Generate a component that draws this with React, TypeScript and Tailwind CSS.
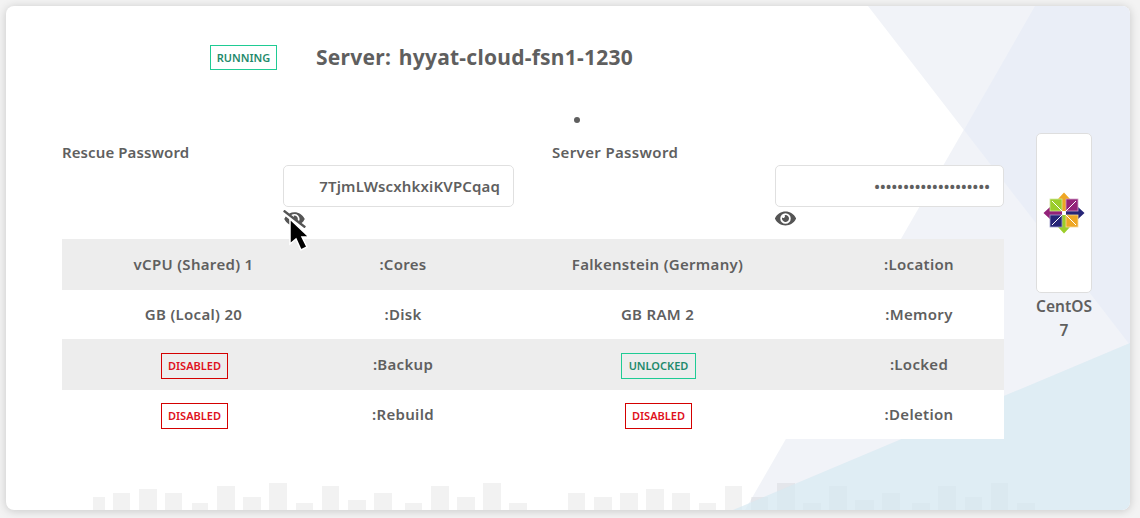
import type { ReactNode } from 'react';
import { FaEye, FaEyeSlash } from 'react-icons/fa';

const bars = [
  [93, 12, 13], [113, 17, 17], [139, 18, 21], [165, 17, 17], [192, 16, 7], [217, 18, 24], [243, 18, 13], [269, 18, 27], [296, 17, 7],
  [322, 17, 24], [348, 18, 10], [374, 18, 17], [405, 17, 7], [431, 18, 24], [457, 18, 13], [483, 18, 27], [509, 18, 7],
  [568, 17, 17], [594, 18, 13], [620, 18, 17], [646, 18, 21], [672, 18, 17], [699, 17, 7], [725, 17, 24], [751, 17, 13], [777, 18, 27],
  [803, 18, 7], [829, 18, 24], [855, 19, 10], [882, 18, 17], [912, 18, 7], [938, 18, 24], [965, 17, 13], [991, 17, 27], [1017, 18, 7],
];

function Backdrop() {
  return (
    <svg className="absolute inset-0 w-full h-full" viewBox="6 6 1124 504" preserveAspectRatio="none">
      <polygon points="868,6 1130,6 1130,345" fill="#f1f3f8" />
      <polygon points="1035,6 745,510 1130,510 1130,345" fill="#f1f3f8" />
      <polygon points="1035,6 1130,6 1130,345 964,130" fill="#eaeef7" />
      {bars.map(([x, w, h]) => (
        <rect key={x} x={x} y={510 - h} width={w} height={h} fill="#000" fillOpacity={0.05} />
      ))}
      <polygon points="733,510 1130,343 1130,510" fill="#d7eaf2" fillOpacity={0.7} />
    </svg>
  );
}

function Badge({ label, tone, size }: { label: string; tone: 'green' | 'red'; size: string }) {
  const cls =
    tone === 'green'
      ? 'border-[#1fcb94] text-[#1f8a6c]'
      : 'border-[#d40000] text-[#e01020]';
  return (
    <span className={`inline-block border text-center text-[11px] font-semibold ${size} ${cls}`}>
      {label}
    </span>
  );
}

function PasswordField({ label, value, type, slashed, inputWidth, labelTracking }: { label: string; value: string; type: string; slashed?: boolean; inputWidth: string; labelTracking: string }) {
  return (
    <div className="flex justify-between">
      <span className={`font-semibold text-[15px] leading-[20px] text-[#5f5f5f] mt-[19px] ${labelTracking}`}>{label}</span>
      <div className={`flex flex-col mt-[42px] ${inputWidth}`}>
        <input
          readOnly
          type={type}
          value={value}
          className="w-full h-[42px] rounded-[5px] border border-[#e0e0e0] bg-white text-right pr-[13px] text-[15px] tracking-[0.15px] font-semibold text-[#5f5f5f] outline-none"
        />
        {slashed ? <FaEyeSlash className="text-[#555] w-[23px] h-[18px] mt-[3px]" /> : <FaEye className="text-[#555] w-[21px] h-[19px] mt-[2px]" />}
      </div>
    </div>
  );
}

function Row({ cells, shaded }: { cells: ReactNode[]; shaded?: boolean }) {
  return (
    <div className={`grid grid-cols-[263px_156px_353px_170px] items-center text-center text-[15px] tracking-[0.3px] font-semibold text-[#5f5f5f] ${shaded ? 'h-[51px] bg-[#ededed]' : 'h-[49px] bg-white'}`}>
      {cells.map((c, i) => (
        <div key={i} className="flex justify-center">{c}</div>
      ))}
    </div>
  );
}

function TableBadge(props: { label: string; tone: 'green' | 'red'; size: string }) {
  return (
    <span className="mt-[3px] ml-[2px] flex tracking-normal">
      <Badge {...props} />
    </span>
  );
}

export default function App() {
  return (
    <div className="h-[518px] w-[1140px] overflow-hidden bg-[#f3f3f3] pt-[6px] pl-[6px] font-['Noto_Sans',sans-serif]">
      <div className="relative w-[1124px] h-[504px] rounded-[8px] overflow-hidden bg-white shadow-[0_1px_10px_rgba(0,0,0,0.18)]">
        <Backdrop />
        <div className="relative flex pl-[56px]">
          <div className="w-[942px]">
            <div className="flex items-center h-[52px] mt-[26px] pl-[148px]">
              <Badge label="RUNNING" tone="green" size="w-[67px] h-[25px] leading-[23px] mb-[1px]" />
              <h1 className="ml-[39px] text-[21px] tracking-[0.25px] [word-spacing:2px] font-bold text-[#5f5f5f]">Server: hyyat-cloud-fsn1-1230</h1>
            </div>
            <div className="h-[6px] mt-[33px] pl-[512px]">
              <div className="w-[6px] h-[6px] rounded-full bg-[#5f5f5f]" />
            </div>
            <div className="grid grid-cols-[452px_452px] gap-x-[38px] h-[116px]">
              <PasswordField label="Rescue Password" labelTracking="tracking-[0.1px]" value="7TjmLWscxhkxiKVPCqaq" type="text" slashed inputWidth="w-[231px]" />
              <PasswordField label="Server Password" labelTracking="tracking-[0.35px]" value="aaaaaaaaaaaaaaaaaaaa" type="password" inputWidth="w-[229px]" />
            </div>
            <Row shaded cells={['vCPU (Shared) 1', ':Cores', 'Falkenstein (Germany)', ':Location']} />
            <Row cells={['GB (Local) 20', ':Disk', 'GB RAM 2', ':Memory']} />
            <Row shaded cells={[<TableBadge label="DISABLED" tone="red" size="w-[67px] h-[26px] leading-[24px]" />, ':Backup', <TableBadge label="UNLOCKED" tone="green" size="w-[75px] h-[26px] leading-[24px]" />, ':Locked']} />
            <Row cells={[<TableBadge label="DISABLED" tone="red" size="w-[67px] h-[26px] leading-[24px]" />, ':Rebuild', <TableBadge label="DISABLED" tone="red" size="w-[67px] h-[26px] leading-[24px]" />, ':Deletion']} />
          </div>
          <div className="ml-[32px] w-[56px] mt-[127px] flex flex-col items-center">
            <div className="w-[56px] h-[160px] rounded-[5px] border border-[#dedede] bg-white flex items-center justify-center">
              <svg width="42" height="42" viewBox="0 0 42 42">
                <polygon points="21,0.5 27,7 23,7 23,19 19,19 19,7 15,7" fill="#efa724" />
                <polygon points="41.5,21 35,27 35,23 23,23 23,19 35,19 35,15" fill="#262577" />
                <polygon points="21,41.5 15,35 19,35 19,23 23,23 23,35 27,35" fill="#9ccd2a" />
                <polygon points="0.5,21 7,15 7,19 19,19 19,23 7,23 7,27" fill="#932279" />
                <rect x="7" y="7" width="12" height="12" fill="#9ccd2a" stroke="#cfe69a" strokeWidth="0.8" />
                <rect x="23" y="7" width="12" height="12" fill="#932279" stroke="#cfa0c8" strokeWidth="0.8" />
                <rect x="23" y="23" width="12" height="12" fill="#efa724" stroke="#f8d898" strokeWidth="0.8" />
                <rect x="7" y="23" width="12" height="12" fill="#262577" stroke="#a0a0cc" strokeWidth="0.8" />
                <path d="M19 19 9 9M23 19 33 9M23 23 33 33M19 23 9 33" stroke="#fff" strokeWidth="1" />
              </svg>
            </div>
            <div className="text-center text-[15.5px] leading-[24px] font-semibold text-[#5f5f5f] mt-[1px]">
              <div>CentOS</div>
              <div>7</div>
            </div>
          </div>
        </div>
        <svg className="absolute left-[282px] top-[212px]" width="22" height="34" viewBox="0 0 22 34">
          <path d="M2 1v25l6-5 5 11 6-3-5-10h7z" fill="#000" stroke="#fff" strokeWidth="1.5" />
        </svg>
      </div>
    </div>
  );
}
